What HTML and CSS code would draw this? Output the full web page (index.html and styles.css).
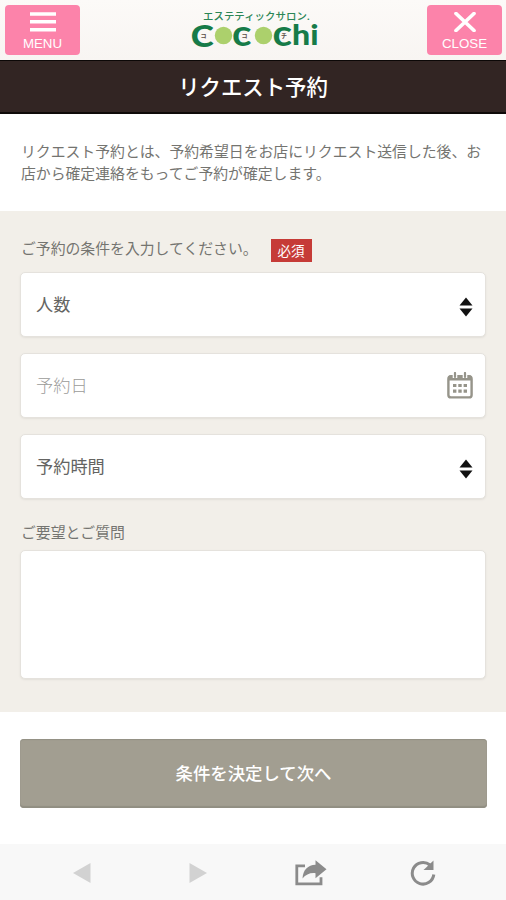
FILE: index.html
```html
<!DOCTYPE html>
<html lang="ja">
<head>
<meta charset="utf-8">
<title>リクエスト予約</title>
<link rel="stylesheet" href="styles.css">
</head>
<body>
<header class="header">
  <button class="nav-btn">
    <svg width="26" height="20" viewBox="0 0 26 20"><path d="M0 2h26M0 9.8h26M0 17.8h26" stroke="#fff" stroke-width="3.4"/></svg>
    <span class="nav-label">MENU</span>
  </button>
  <svg class="logo" width="131" height="48" viewBox="188 3 131 48">
    <text class="logo-sub" x="203" y="19.500" textLength="107" lengthAdjust="spacingAndGlyphs">エステティックサロン.</text>
    <circle cx="223.500" cy="35.500" r="8.700" fill="#acd06c"/>
    <circle cx="263.500" cy="35.500" r="8.700" fill="#acd06c"/>
    <text class="logo-cap" x="190.700" y="46.500" textLength="23" lengthAdjust="spacingAndGlyphs">C</text>
    <text class="logo-main" x="232" y="45.500" textLength="19.500" lengthAdjust="spacingAndGlyphs">c</text>
    <text class="logo-main" x="272.500" y="45.500" textLength="19.500" lengthAdjust="spacingAndGlyphs">c</text>
    <text class="logo-hi" x="292" y="45" textLength="26.500" lengthAdjust="spacingAndGlyphs">hi</text>
    <text class="logo-kana" x="200.500" y="38">コ</text>
    <text class="logo-kana" x="241.500" y="38">コ</text>
    <text class="logo-kana" x="281" y="38">チ</text>
  </svg>
  <button class="nav-btn">
    <svg width="26" height="20" viewBox="0 0 26 20"><path d="M4 1.500l18 17M22 1.500l-18 17" stroke="#fff" stroke-width="3.700" stroke-linecap="round"/></svg>
    <span class="nav-label">CLOSE</span>
  </button>
</header>
<h1 class="title">リクエスト予約</h1>
<p class="intro">リクエスト予約とは、予約希望日をお店にリクエスト送信した後、お店から確定連絡をもってご予約が確定します。</p>
<main class="form">
  <div class="label-row"><span>ご予約の条件を入力してください。</span><span class="badge">必須</span></div>
  <div class="field"><span class="value">人数</span>
    <svg class="sorter" width="14" height="20" viewBox="0 0 14 20"><path d="M7 .5L13.5 8.5H.5zM.5 11.5h13L7 19.5z" fill="#111"/></svg>
  </div>
  <div class="field placeholder"><span class="value">予約日</span>
    <svg width="26" height="27" viewBox="0 0 26 27">
      <rect x="1.4" y="4.4" width="23.2" height="21" rx="2.5" fill="#fff" stroke="#96948a" stroke-width="2.4"/>
      <path d="M1 8.500V6q0-3 3-3h18q3 0 3 3v2.500z" fill="#96948a"/>
      <path d="M8 0v6M18 0v6" stroke="#fff" stroke-width="4.600"/>
      <path d="M8 1v4M18 1v4" stroke="#96948a" stroke-width="2.2" stroke-linecap="round"/>
      <path d="M6 13.500h3.4M11.3 13.500h3.4M16.6 13.500H20M6 19.2h3.4M11.3 19.2h3.4M16.6 19.2H20" stroke="#96948a" stroke-width="3.2"/>
    </svg>
  </div>
  <div class="field"><span class="value">予約時間</span>
    <svg class="sorter" width="14" height="20" viewBox="0 0 14 20"><path d="M7 .5L13.5 8.5H.5zM.5 11.5h13L7 19.5z" fill="#111"/></svg>
  </div>
  <div class="label">ご要望とご質問</div>
  <div class="field area"></div>
</main>
<div class="submit-wrap"><button class="submit">条件を決定して次へ</button></div>
<footer class="toolbar">
  <svg width="18" height="20" viewBox="0 0 18 20"><path d="M17.5 0v20L0 10z" fill="#d2d2d2"/></svg>
  <svg width="18" height="20" viewBox="0 0 18 20"><path d="M.5 0v20L18 10z" fill="#d2d2d2"/></svg>
  <svg width="32" height="26" viewBox="0 0 32 26"><path d="M10 5.8H1.8v18H26v-6.5" fill="none" stroke="#8b8b8b" stroke-width="2.8"/><path d="M7.500 18.500C8 9.500 13 5 20.500 4.700V.3L31.500 9.300 20.500 18.300V13.200C15 12.600 11 14.500 7.500 18.500z" fill="#8b8b8b"/></svg>
  <svg width="26" height="27" viewBox="0 0 26 27"><path d="M20 5A10.800 10.800 0 1 0 23.800 14.500" fill="none" stroke="#8b8b8b" stroke-width="3"/><path d="M23.500 .5V10H13.500z" fill="#8b8b8b"/></svg>
</footer>
</body>
</html>
```
FILE: styles.css
```css
* { box-sizing: border-box; }
body {
  margin: 0;
  width: 506px;
  height: 900px;
  display: flex;
  flex-direction: column;
  overflow: hidden;
  background: #fff;
  color: #747470;
  font: 14.85px/22px "Noto Sans CJK JP", sans-serif;
}
button { border: 0; padding: 0; font-family: inherit; color: #fff; }
svg { display: block; }
.header {
  height: 60px;
  display: flex;
  justify-content: space-between;
  align-items: flex-start;
  padding: 5px 4px 0 5px;
  background: linear-gradient(#fcfaf8, #f8f5f2);
}
.nav-btn {
  width: 75px;
  height: 50px;
  padding-top: 7px;
  display: flex;
  flex-direction: column;
  align-items: center;
  border-radius: 4px;
  background: #fc83aa;
}
.nav-label { font: 13.3px/15px "Liberation Sans", sans-serif; margin-top: 4px; }
.logo { margin-top: -2px; }
.logo-sub { font-size: 10px; font-weight: 500; fill: #2b8656; }
.logo-cap { font: 900 31px Lato, sans-serif; fill: #167b48; }
.logo-main { font: 700 37px Lato, sans-serif; fill: #167b48; }
.logo-hi { font: 900 29px Lato, sans-serif; fill: #167b48; }
.logo-kana { font-size: 6px; font-weight: 700; fill: #594c45; }
.title {
  margin: 0;
  height: 54px;
  border-top: 1px solid #0c0807;
  border-bottom: 2px solid #0f0a09;
  background: #322523;
  color: #fff;
  text-align: center;
  font-size: 21.4px;
  font-weight: 500;
  line-height: 50px;
}
.intro { margin: 0; height: 97px; padding: 26px 21px 0; }
.form { height: 501px; padding: 25px 20px 0; background: #f2efe9; }
.label-row { display: flex; height: 36px; padding-left: 1px; line-height: 24px; }
.badge {
  width: 41px;
  height: 23px;
  margin: 3px 0 0 13px;
  background: #c63b37;
  color: #fff;
  font-size: 13.5px;
  line-height: 23px;
  text-align: center;
}
.field {
  height: 65px;
  margin-bottom: 16px;
  padding: 0 12px 0 15px;
  display: flex;
  align-items: center;
  justify-content: space-between;
  border: 1px solid #e5e2dd;
  border-radius: 5px;
  background: #fff;
  box-shadow: 0 1px 2px #e2dfd9;
  color: #646462;
  font-size: 17.2px;
}
.value { padding-bottom: 2px; }
.sorter { margin-top: 4px; }
.placeholder { color: #9b9b99; font-weight: 300; }
.label { height: 35px; padding: 6px 0 0 1px; }
.area { height: 129px; margin: 0; }
.submit-wrap { height: 132px; padding: 27px 20px 0; }
.submit {
  display: block;
  width: 467px;
  height: 69px;
  padding-bottom: 2px;
  border-radius: 4px;
  background: #a29e91;
  box-shadow: inset 0 -2px 1px #918e82, inset 0 1px 1px #939084;
  font-size: 17.4px;
  font-weight: 500;
  line-height: 66px;
}
.toolbar {
  height: 56px;
  padding: 2px 70px 0 73px;
  display: flex;
  align-items: center;
  gap: 97px;
  background: #f8f8f8;
}
.toolbar svg:nth-child(2) { margin-left: 1px; }
.toolbar svg:nth-child(3) { margin-left: -9px; }
.toolbar svg:nth-child(4) { margin-left: -14px; }
```
